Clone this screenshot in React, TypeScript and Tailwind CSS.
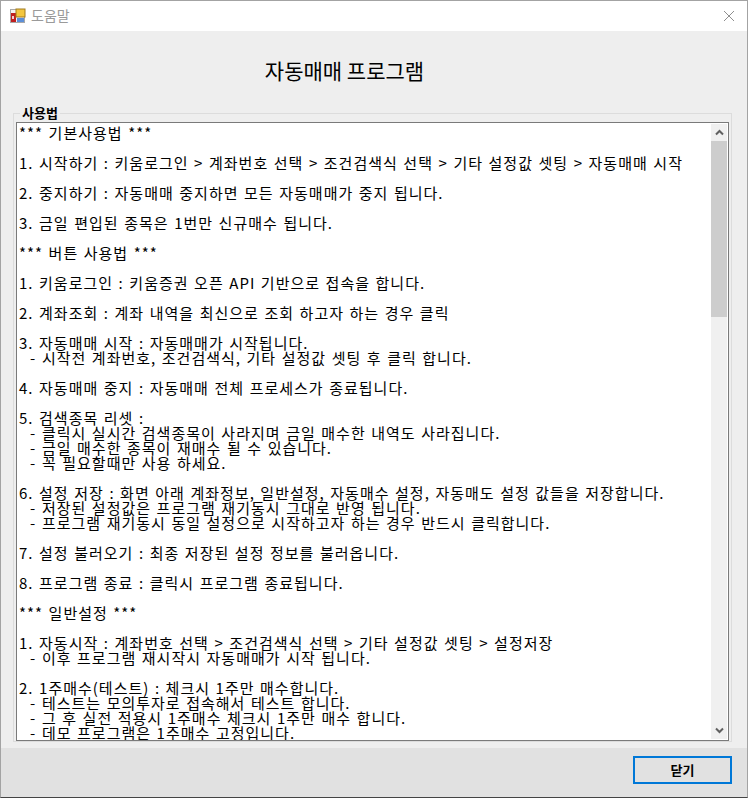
const lines = [
  "*** 기본사용법 ***",
  "",
  "1. 시작하기 : 키움로그인 > 계좌번호 선택 > 조건검색식 선택 > 기타 설정값 셋팅 > 자동매매 시작",
  "",
  "2. 중지하기 : 자동매매 중지하면 모든 자동매매가 중지 됩니다.",
  "",
  "3. 금일 편입된 종목은 1번만 신규매수 됩니다.",
  "",
  "*** 버튼 사용법 ***",
  "",
  "1. 키움로그인 : 키움증권 오픈 API 기반으로 접속을 합니다.",
  "",
  "2. 계좌조회 : 계좌 내역을 최신으로 조회 하고자 하는 경우 클릭",
  "",
  "3. 자동매매 시작 : 자동매매가 시작됩니다.",
  "  - 시작전 계좌번호, 조건검색식, 기타 설정값 셋팅 후 클릭 합니다.",
  "",
  "4. 자동매매 중지 : 자동매매 전체 프로세스가 종료됩니다.",
  "",
  "5. 검색종목 리셋 :",
  "  - 클릭시 실시간 검색종목이 사라지며 금일 매수한 내역도 사라집니다.",
  "  - 금일 매수한 종목이 재매수 될 수 있습니다.",
  "  - 꼭 필요할때만 사용 하세요.",
  "",
  "6. 설정 저장 : 화면 아래 계좌정보, 일반설정, 자동매수 설정, 자동매도 설정 값들을 저장합니다.",
  "  - 저장된 설정값은 프로그램 재기동시 그대로 반영 됩니다.",
  "  - 프로그램 재기동시 동일 설정으로 시작하고자 하는 경우 반드시 클릭합니다.",
  "",
  "7. 설정 불러오기 : 최종 저장된 설정 정보를 불러옵니다.",
  "",
  "8. 프로그램 종료 : 클릭시 프로그램 종료됩니다.",
  "",
  "*** 일반설정 ***",
  "",
  "1. 자동시작 : 계좌번호 선택 > 조건검색식 선택 > 기타 설정값 셋팅 > 설정저장",
  "  - 이후 프로그램 재시작시 자동매매가 시작 됩니다.",
  "",
  "2. 1주매수(테스트) : 체크시 1주만 매수합니다.",
  "  - 테스트는 모의투자로 접속해서 테스트 합니다.",
  "  - 그 후 실전 적용시 1주매수 체크시 1주만 매수 합니다.",
  "  - 데모 프로그램은 1주매수 고정입니다.",
];

function AppIcon() {
  return (
    <svg width="16" height="16" viewBox="0 0 16 16" className="shrink-0">
      <rect x="0.5" y="1.5" width="14" height="13" fill="#f4f4f4" stroke="#a8a8a8" />
      <rect x="1" y="5" width="5" height="9" fill="#c02020" />
      <rect x="2" y="8" width="2" height="3" fill="#f0d0d0" />
      <rect x="6" y="1" width="9" height="8" fill="#f3c63f" stroke="#a07a20" strokeWidth="1" />
      <rect x="7" y="10" width="7" height="4" fill="#5c8fd8" />
    </svg>
  );
}

export default function App() {
  return (
    <div className="w-[748px] h-[798px] flex flex-col bg-[#eeeeee] border-t border-x border-[#a3a3a3] border-b-[#444444] border-b overflow-hidden font-['Noto_Sans_CJK_KR','Noto_Sans',sans-serif] text-black">
      <div className="h-[30px] shrink-0 bg-white flex items-center pl-[9px] pr-[12px]">
        <AppIcon />
        <span className="ml-[5px] text-[14px] leading-[16px] mb-[3px] text-[#9a9a9a]">도움말</span>
        <svg width="12" height="12" viewBox="0 0 12 12" className="ml-auto text-[#8f8f8f]">
          <path d="M1 1 L11 11 M11 1 L1 11" stroke="currentColor" strokeWidth="1" fill="none" />
        </svg>
      </div>

      <div className="flex-1 flex flex-col min-h-0 pl-[12px] pr-[15px]">
        <div className="h-[82px] shrink-0 flex items-start justify-center pt-[25px] pr-[56px]">
          <h1 className="text-[21px] leading-[28px] font-normal">자동매매 프로그램</h1>
        </div>
        <div className="relative h-[629px] border border-[#dcdcdc] mb-[5px] pl-[2px] pr-[2px] pt-[8px]">
          <span className="absolute -top-[9px] left-[6px] px-[2px] bg-[#eeeeee] text-[13px] leading-[16px] font-bold">사용법</span>
          <div className="h-full flex bg-white border border-[#7a7a7a]">
            <div className="flex-1 min-w-0 overflow-hidden pl-[2px] pt-[2px] text-[15px] tracking-[1px] [word-spacing:1.2px] leading-[15px] whitespace-pre">
              {lines.map((line, i) => (
                <div key={i} className="h-[15px]">{line}</div>
              ))}
            </div>
            <div className="w-[16px] shrink-0 mr-[1px] my-[1px] bg-[#f0f0f0] flex flex-col items-center">
              <div className="h-[17px] shrink-0 flex items-center justify-center">
                <svg width="9" height="7" viewBox="0 0 9 7"><path d="M1 5.5 L4.5 2 L8 5.5" stroke="#606060" strokeWidth="2" fill="none" /></svg>
              </div>
              <div className="w-full h-[176px] shrink-0 bg-[#cdcdcd]" />
              <div className="flex-1" />
              <div className="h-[17px] shrink-0 flex items-center justify-center">
                <svg width="9" height="7" viewBox="0 0 9 7"><path d="M1 1.5 L4.5 5 L8 1.5" stroke="#606060" strokeWidth="2" fill="none" /></svg>
              </div>
            </div>
          </div>
        </div>
      </div>

      <div className="h-[49px] shrink-0 bg-[#e1e1e1] flex items-start justify-end pr-[15px] pt-[8px]">
        <button className="w-[99px] h-[28px] border-[2px] border-[#0078d7] bg-[#e1e1e1] text-[13px] font-bold flex items-center justify-center">닫기</button>
      </div>
    </div>
  );
}
